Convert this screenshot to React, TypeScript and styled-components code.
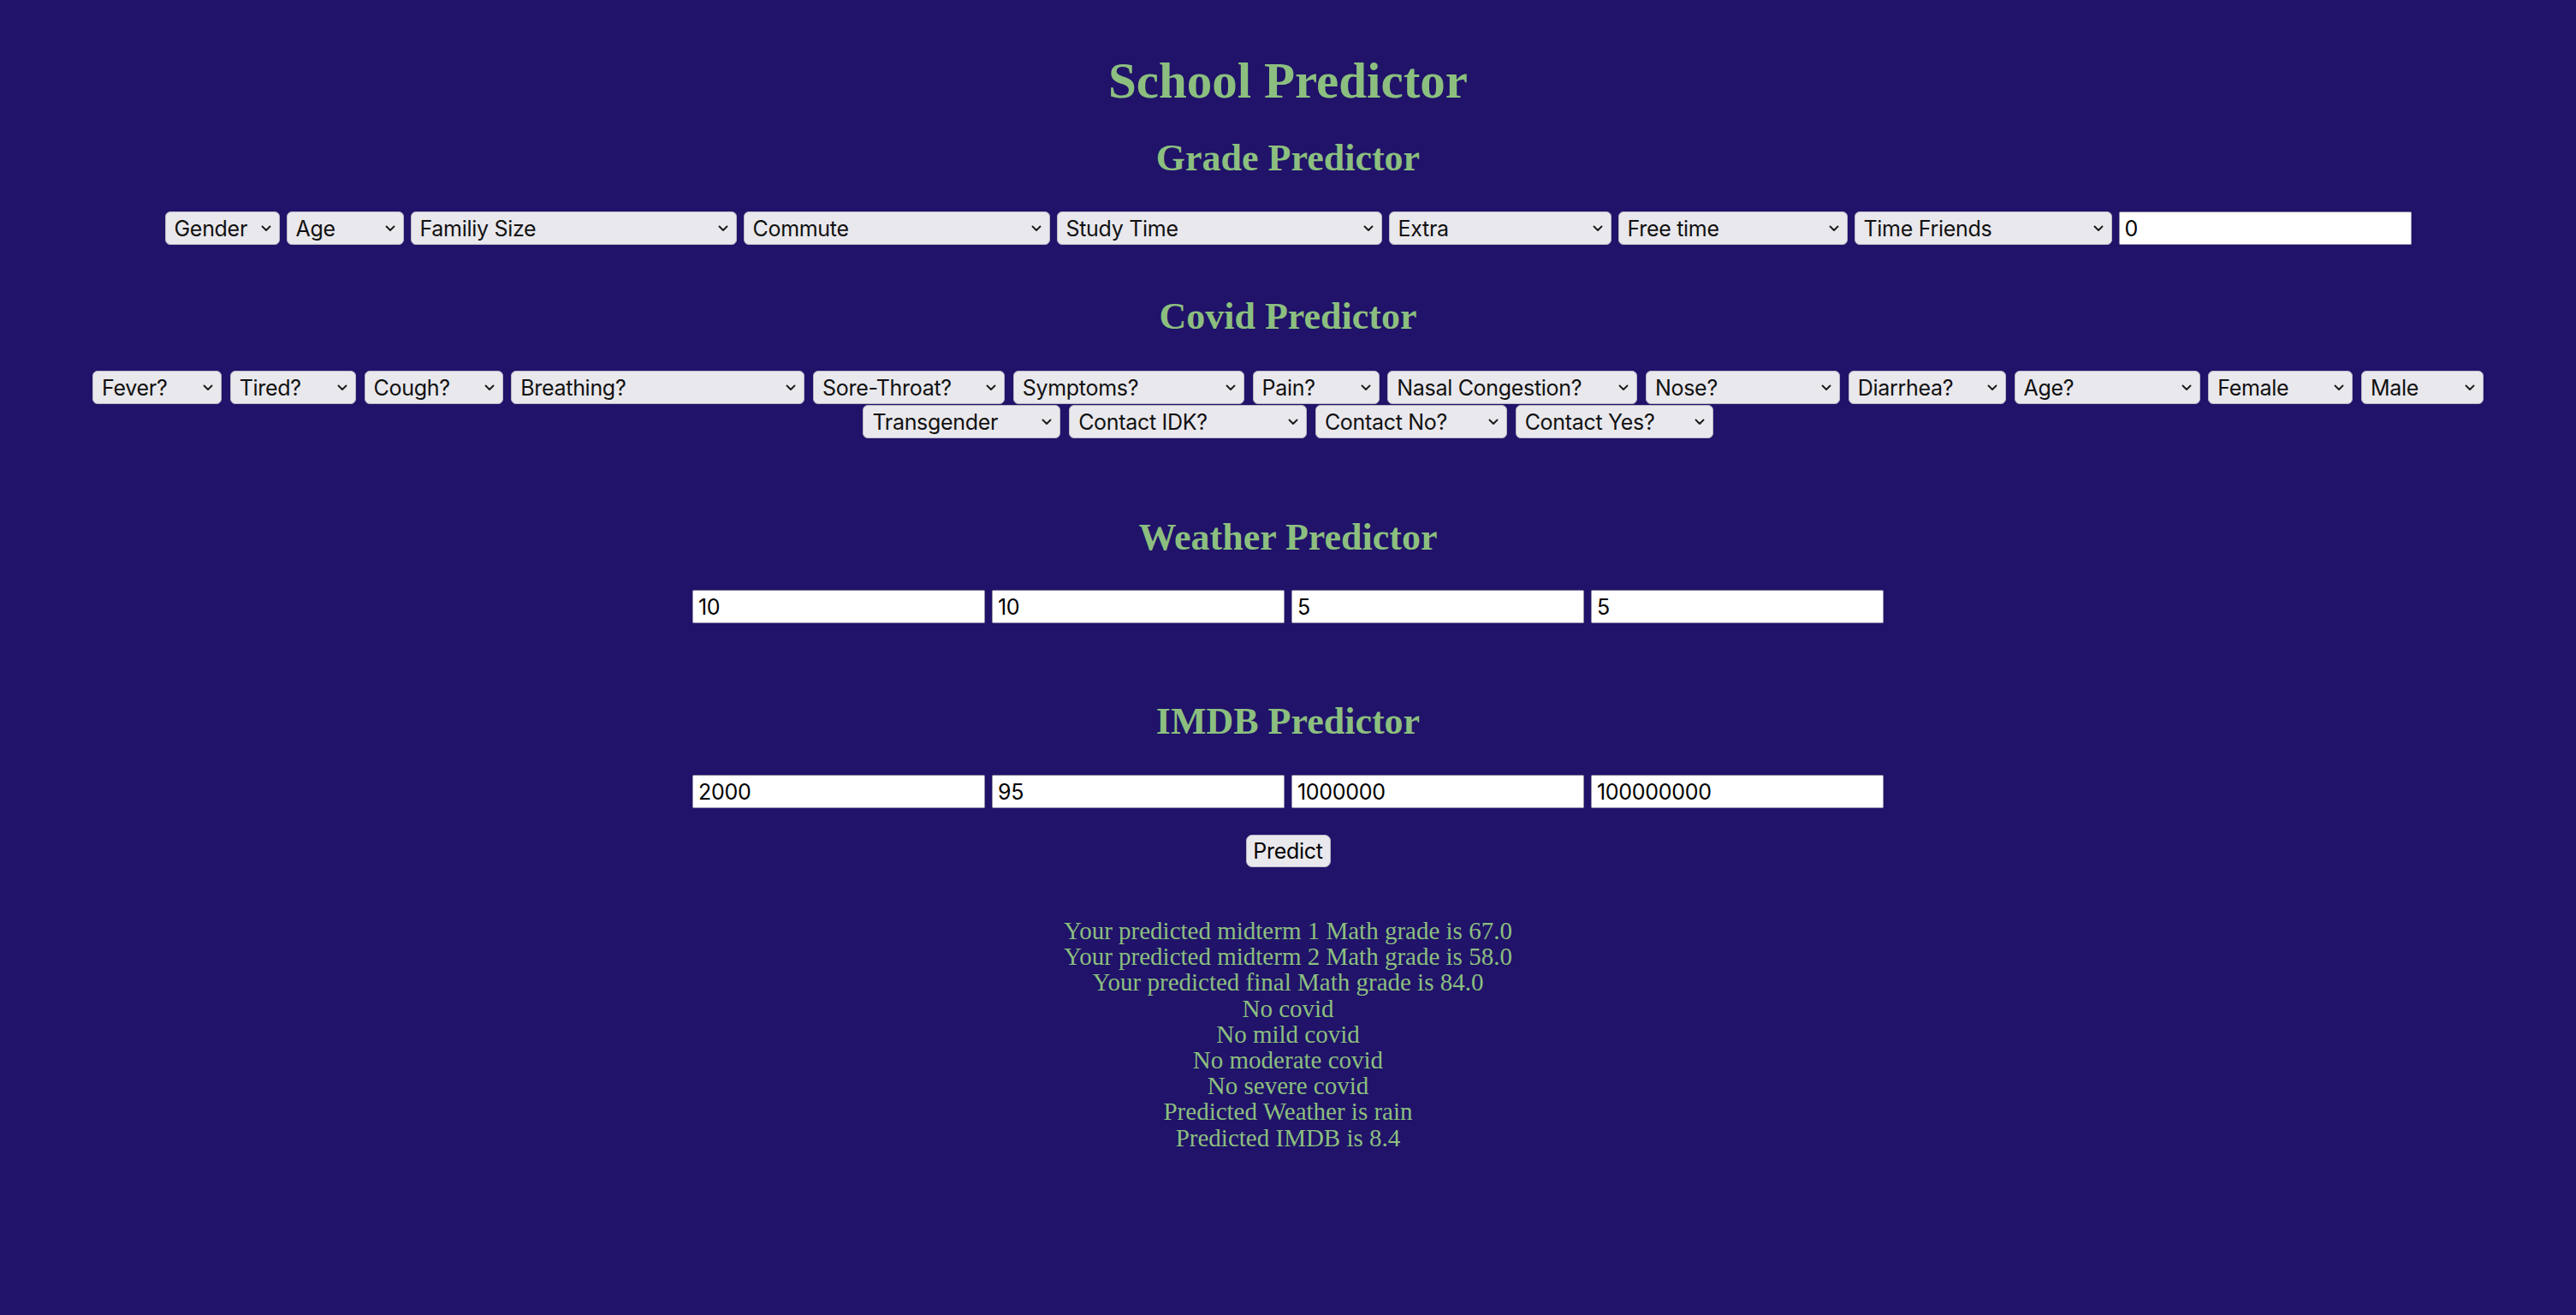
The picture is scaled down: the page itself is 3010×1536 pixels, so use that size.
import React from "react";
import styled, { createGlobalStyle } from "styled-components";

const GlobalStyle = createGlobalStyle`
  html, body {
    margin: 0;
    padding: 0;
    background: #201369;
  }
`;

const Page = styled.div`
  min-height: 1536px;
  box-sizing: border-box;
  padding-top: 60px;
  display: flex;
  flex-direction: column;
  align-items: center;
  background: #201369;
  font-family: "Liberation Serif", "Times New Roman", serif;
  color: #8cbf7f;
`;

const Title = styled.h1`
  margin: 0;
  font-size: 59px;
  line-height: 68px;
  font-weight: bold;
`;

const Heading = styled.h2<{ $top: number }>`
  margin: ${(p) => p.$top}px 0 0;
  font-size: 44px;
  line-height: 50px;
  font-weight: bold;
`;

const Row = styled.div<{ $top: number; $gap: number; $maxW?: number }>`
  margin-top: ${(p) => p.$top}px;
  max-width: ${(p) => (p.$maxW ? `${p.$maxW}px` : "none")};
  display: flex;
  flex-wrap: wrap;
  justify-content: center;
  column-gap: ${(p) => p.$gap}px;
  row-gap: 1px;
`;

const SelectWrap = styled.span<{ $w: number }>`
  position: relative;
  display: inline-block;
  width: ${(p) => p.$w}px;
  height: 39px;
`;

const Select = styled.select`
  appearance: none;
  -webkit-appearance: none;
  width: 100%;
  height: 100%;
  margin: 0;
  box-sizing: border-box;
  padding: 0 30px 0 10px;
  border: 1px solid #b9b7c6;
  border-radius: 6px;
  background: #e9e8ed;
  color: #111;
  font-family: Inter, "Liberation Sans", sans-serif;
  font-size: 25px;
  letter-spacing: -0.3px;
  outline: none;
`;

const Chevron = styled.svg`
  position: absolute;
  right: 10px;
  top: 16px;
  width: 12px;
  height: 8px;
  pointer-events: none;
`;

const TextInput = styled.input`
  width: 342px;
  height: 39px;
  margin: 0;
  box-sizing: border-box;
  padding: 0 6px;
  border: 1px solid #9793ad;
  border-top-color: #7d7a95;
  border-radius: 2px;
  background: #fff;
  color: #000;
  font-family: Inter, "Liberation Sans", sans-serif;
  font-size: 25px;
  letter-spacing: -0.3px;
  outline: none;
`;

const Button = styled.button`
  margin-top: 31px;
  width: 99px;
  height: 38px;
  padding: 0;
  border: 1px solid #b9b7c6;
  border-radius: 7px;
  background: #e9e8ed;
  color: #000;
  font-family: Inter, "Liberation Sans", sans-serif;
  font-size: 25px;
  letter-spacing: -0.3px;
`;

const Results = styled.div`
  margin-top: 59px;
  text-align: center;
  font-size: 29px;
  line-height: 30.2px;
`;

function Dropdown({ label, width }: { label: string; width: number }) {
  return (
    <SelectWrap $w={width}>
      <Select defaultValue="">
        <option value="">{label}</option>
      </Select>
      <Chevron viewBox="0 0 12 8">
        <path d="M1.5 1.5l4.5 4.5 4.5-4.5" fill="none" stroke="#1a1a1a" strokeWidth="1.9" strokeLinecap="round" strokeLinejoin="round" />
      </Chevron>
    </SelectWrap>
  );
}

const grade: [string, number][] = [
  ["Gender", 134],
  ["Age", 137],
  ["Familiy Size", 381],
  ["Commute", 358],
  ["Study Time", 380],
  ["Extra", 260],
  ["Free time", 268],
  ["Time Friends", 301],
];

const covid: [string, number][] = [
  ["Fever?", 151],
  ["Tired?", 147],
  ["Cough?", 162],
  ["Breathing?", 343],
  ["Sore-Throat?", 224],
  ["Symptoms?", 270],
  ["Pain?", 148],
  ["Nasal Congestion?", 292],
  ["Nose?", 227],
  ["Diarrhea?", 184],
  ["Age?", 217],
  ["Female", 169],
  ["Male", 143],
  ["Transgender", 231],
  ["Contact IDK?", 278],
  ["Contact No?", 224],
  ["Contact Yes?", 231],
];

const results = [
  "Your predicted midterm 1 Math grade is 67.0",
  "Your predicted midterm 2 Math grade is 58.0",
  "Your predicted final Math grade is 84.0",
  "No covid",
  "No mild covid",
  "No moderate covid",
  "No severe covid",
  "Predicted Weather is rain",
  "Predicted IMDB is 8.4",
];

export default function App() {
  return (
    <>
      <GlobalStyle />
      <Page>
        <Title>School Predictor</Title>

        <Heading $top={32}>Grade Predictor</Heading>
        <Row $top={37} $gap={8}>
          {grade.map(([l, w]) => (
            <Dropdown key={l} label={l} width={w} />
          ))}
          <TextInput defaultValue="0" />
        </Row>

        <Heading $top={59}>Covid Predictor</Heading>
        <Row $top={38} $gap={9.75} $maxW={2800}>
          {covid.map(([l, w]) => (
            <Dropdown key={l} label={l} width={w} />
          ))}
        </Row>

        <Heading $top={91}>Weather Predictor</Heading>
        <Row $top={36} $gap={8}>
          {["10", "10", "5", "5"].map((v, i) => (
            <TextInput key={i} defaultValue={v} />
          ))}
        </Row>

        <Heading $top={90}>IMDB Predictor</Heading>
        <Row $top={37} $gap={8}>
          {["2000", "95", "1000000", "100000000"].map((v, i) => (
            <TextInput key={i} defaultValue={v} />
          ))}
        </Row>

        <Button>Predict</Button>

        <Results>
          {results.map((r) => (
            <div key={r}>{r}</div>
          ))}
        </Results>
      </Page>
    </>
  );
}
